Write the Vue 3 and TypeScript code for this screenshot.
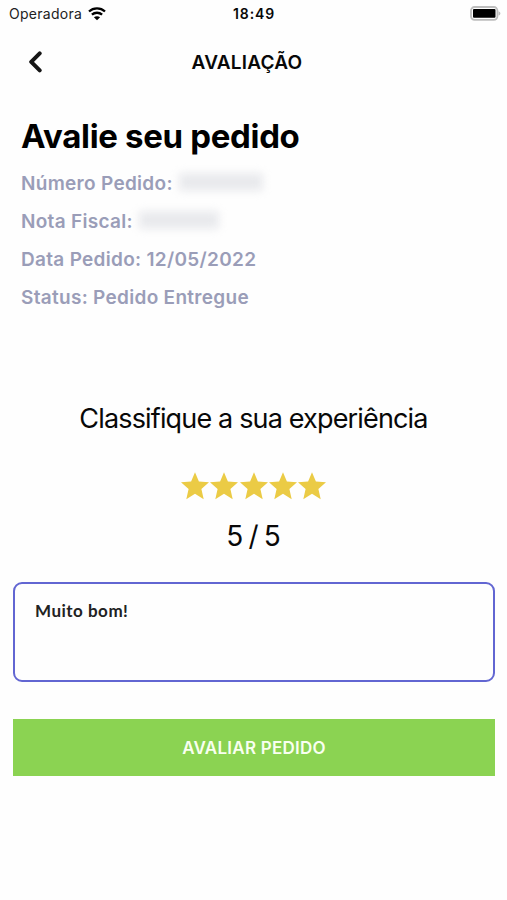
<script setup lang="ts">
import { ref } from 'vue'

interface Detail {
  label: string
  value?: string
  hiddenWidth?: number
}

const details: Detail[] = [
  { label: 'Número Pedido:', hiddenWidth: 84 },
  { label: 'Nota Fiscal:', hiddenWidth: 80 },
  { label: 'Data Pedido:', value: '12/05/2022' },
  { label: 'Status:', value: 'Pedido Entregue' },
]

const maxRating = 5
const rating = ref(5)
const comment = ref('Muito bom!')
</script>

<template>
  <main class="screen">
    <div class="status-bar">
      <div class="carrier">
        <span>Operadora</span>
        <svg class="wifi" viewBox="0 0 18 14" width="18" height="14">
          <path d="M1 4.500C5.500.3 12.500.3 17 4.500" />
          <path d="M3.900 7.700C6.800 5.100 11.200 5.100 14.100 7.700" />
          <path class="dot" d="M5.900 10.300C7.700 8.800 10.300 8.800 12.100 10.300L9 13.300Z" />
        </svg>
      </div>
      <span class="clock">18:49</span>
      <svg class="battery" viewBox="0 0 31 15" width="31" height="15">
        <rect x="1" y="1" width="26.400" height="12.800" rx="3.500" fill="#fff" stroke="#bdbdbd" stroke-width="1.800" />
        <rect x="3" y="3" width="22.500" height="8.800" rx="1" fill="#000" />
        <path d="M28.500 5.200C31 6 31 8.800 28.500 9.600Z" fill="#bdbdbd" />
      </svg>
    </div>

    <header class="nav">
      <button class="back" aria-label="Voltar">
        <svg viewBox="0 0 14 22" width="14" height="22">
          <path d="M11.700 2.300 3.200 10.800 11.700 19.300" />
        </svg>
      </button>
      <h2 class="nav-title">AVALIAÇÃO</h2>
    </header>

    <section class="order">
      <h1>Avalie seu pedido</h1>
      <p v-for="item in details" :key="item.label" class="detail">
        <span>{{ item.label }}{{ item.value ? ' ' + item.value : '' }}</span>
        <span v-if="item.hiddenWidth" class="redacted" :style="{ width: item.hiddenWidth + 'px' }"></span>
      </p>
    </section>

    <section class="rating">
      <p class="question">Classifique a sua experiência</p>
      <div class="stars">
        <svg v-for="n in maxRating" :key="n" viewBox="0 0 28 28" @click="rating = n">
          <path
            :class="{ empty: n > rating }"
            d="M14 .2 17.900 9.400 28 10.300 20.400 17 22.700 27.200 14 21.800 5.300 27.200 7.600 17 0 10.300 10.100 9.400Z"
          />
        </svg>
      </div>
      <p class="score">{{ rating }} / {{ maxRating }}</p>
    </section>

    <textarea v-model="comment" class="comment" spellcheck="false"></textarea>
    <button class="submit">AVALIAR PEDIDO</button>
  </main>
</template>

<style>
body {
  margin: 0;
  background: #fefefe;
}
</style>

<style scoped>
.screen {
  box-sizing: border-box;
  width: 507px;
  height: 900px;
  display: flex;
  flex-direction: column;
  background: #fefefe;
  color: #080808;
  font-family: Inter, "Liberation Sans", sans-serif;
  overflow: hidden;
}

h1,
h2,
p {
  margin: 0;
}

button {
  border: 0;
  padding: 0;
  font-family: inherit;
}

.status-bar {
  display: grid;
  grid-template-columns: 1fr auto 1fr;
  align-items: center;
  height: 27px;
  padding: 0 6px 0 9px;
}

.carrier {
  display: flex;
  align-items: center;
  gap: 6px;
  font-size: 14px;
  letter-spacing: 0.280px;
  color: #222;
}

.wifi {
  fill: none;
  stroke: #000;
  stroke-width: 2.300;
}

.wifi .dot {
  fill: #000;
  stroke: none;
}

.clock {
  margin-right: 2px;
  font-size: 14px;
  font-weight: 600;
  letter-spacing: 0.850px;
}

.battery {
  justify-self: end;
}

.nav {
  display: grid;
  grid-template-columns: 1fr auto 1fr;
  align-items: center;
  height: 70px;
  padding: 0 41px 0 28px;
}

.back {
  width: 14px;
  height: 22px;
  background: none;
}

.back svg {
  display: block;
  fill: none;
  stroke: #161616;
  stroke-width: 4;
  stroke-linecap: round;
  stroke-linejoin: round;
}

.nav-title {
  font-size: 19px;
  font-weight: 600;
  letter-spacing: 0.220px;
}

.order {
  padding: 17px 21px 0;
}

h1 {
  height: 50px;
  line-height: 44px;
  font-size: 33px;
  font-weight: 700;
  letter-spacing: -0.330px;
  color: #000;
  white-space: nowrap;
}

.detail {
  display: flex;
  align-items: center;
  gap: 6px;
  height: 38.200px;
  font-size: 19px;
  font-weight: 600;
  letter-spacing: 0.300px;
  color: #9a9db8;
  white-space: nowrap;
}

.redacted {
  height: 18px;
  margin-bottom: 2px;
  border-radius: 3px;
  background: #e9eaed;
  filter: blur(4px);
}

.rating {
  display: flex;
  flex-direction: column;
  align-items: center;
  padding-top: 80.500px;
}

.question {
  height: 44px;
  line-height: 44px;
  font-size: 27px;
  letter-spacing: -0.840px;
  white-space: nowrap;
}

.stars {
  display: flex;
  gap: 1.400px;
  height: 28px;
  margin-top: 31px;
}

.stars svg {
  width: 28px;
  height: 28px;
  fill: #ebcb45;
}

.stars .empty {
  fill: #dedede;
}

.score {
  margin-top: 14px;
  height: 44px;
  line-height: 44px;
  font-size: 28px;
  word-spacing: -2.600px;
}

.comment {
  box-sizing: border-box;
  flex: none;
  height: 100px;
  margin: 24px 12px 0 13px;
  padding: 17px 20px;
  border: 2px solid #6266d2;
  border-radius: 9px;
  outline: none;
  resize: none;
  background: #fefefe;
  color: #222;
  font-family: Lato, "Open Sans", sans-serif;
  font-size: 17px;
  font-weight: 700;
  letter-spacing: 0.500px;
  line-height: 20px;
}

.submit {
  flex: none;
  height: 57px;
  margin: 37px 12px 0 13px;
  background: #8bd352;
  color: #f8fff0;
  font-size: 17px;
  font-weight: 600;
  letter-spacing: 0.250px;
}
</style>
